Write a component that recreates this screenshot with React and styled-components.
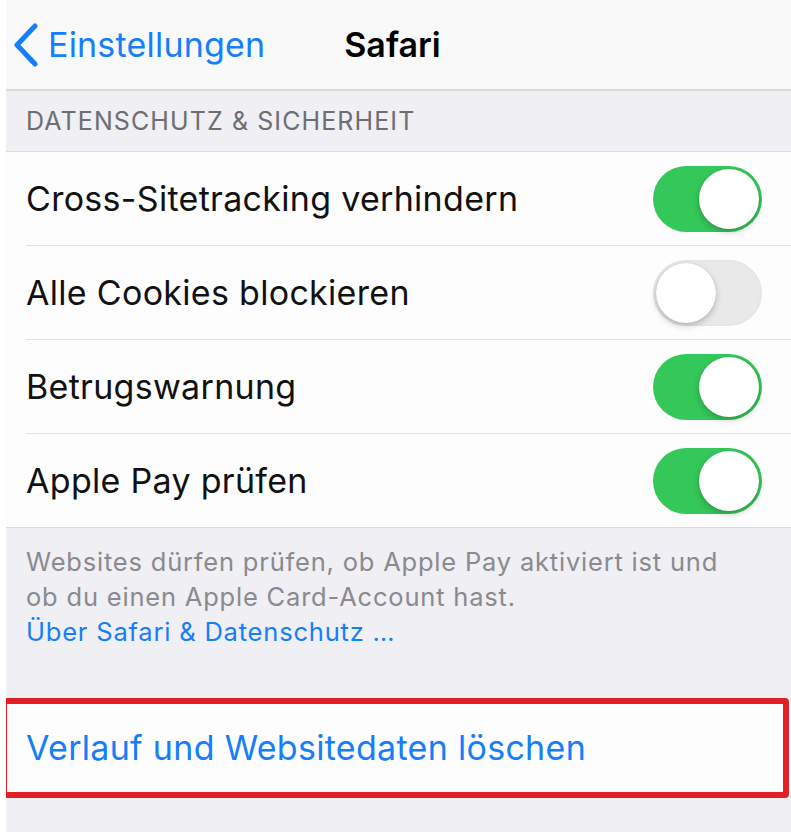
import React from "react";
import styled, { createGlobalStyle } from "styled-components";

const GlobalStyle = createGlobalStyle`
  body {
    margin: 0;
    background: #ffffff;
    font-family: Inter, "Noto Sans", sans-serif;
  }
`;

const Screen = styled.div`
  margin-left: 6px;
  width: 785px;
  height: 832px;
  background: #efeff4;
  overflow: hidden;
`;

const NavBar = styled.div`
  position: relative;
  height: 89px;
  background: #f9f9f9;
  border-bottom: 2px solid #d9d9dc;
  display: flex;
  align-items: center;
`;

const BackButton = styled.div`
  display: flex;
  align-items: center;
  gap: 8px;
  padding-left: 6px;
  color: #157efb;
  font-size: 34px;
  letter-spacing: 0.2px;
`;

const Title = styled.div`
  position: absolute;
  left: 0;
  right: 0;
  text-align: center;
  font-size: 34px;
  font-weight: 600;
  color: #000;
  pointer-events: none;
  padding-right: 12px;
`;

const SectionHeader = styled.div`
  height: 60px;
  padding-left: 20px;
  display: flex;
  align-items: center;
  color: #6d6d72;
  font-size: 25px;
  letter-spacing: 1.1px;
  border-bottom: 1px solid #dcdce0;
`;

const Group = styled.div`
  background: #fdfdfd;
  border-bottom: 1px solid #dcdce0;
`;

const Row = styled.div`
  height: 93px;
  margin-left: 20px;
  padding-right: 29px;
  display: flex;
  align-items: center;
  justify-content: space-between;
  border-bottom: ${(p) => (p.$last ? "none" : "1px solid #e2e2e5")};
`;

const Label = styled.span`
  font-size: 34px;
  color: #111;
  letter-spacing: 0.3px;
`;

const Track = styled.div`
  position: relative;
  width: 109px;
  height: 66px;
  border-radius: 33px;
  box-sizing: border-box;
  background: ${(p) => (p.$on ? "#34c759" : "#e9e9ea")};
  border: ${(p) => (p.$on ? "none" : "2px solid #e6e6e8")};
`;

const Knob = styled.div`
  position: absolute;
  top: ${(p) => (p.$on ? "3px" : "1px")};
  left: ${(p) => (p.$on ? "46px" : "1px")};
  width: 60px;
  height: 60px;
  border-radius: 50%;
  background: #fff;
  box-shadow: 0 3px 6px rgba(0, 0, 0, 0.22), 0 0 1px rgba(0, 0, 0, 0.2);
`;

const Footer = styled.div`
  padding: 16px 20px 0 20px;
  height: 155px;
  font-size: 25.5px;
  line-height: 35px;
  letter-spacing: 0.8px;
  color: #8a8a8e;
  white-space: nowrap;
`;

const FooterLink = styled.div`
  color: #157efb;
`;

const ActionRow = styled.div`
  position: relative;
  height: 97px;
  background: #fdfdfd;
  display: flex;
  align-items: center;
  padding-left: 20px;
  color: #157efb;
  font-size: 34px;
  letter-spacing: 0.3px;
`;

const Highlight = styled.div`
  position: absolute;
  left: -5px;
  right: 2px;
  top: -1px;
  bottom: -2px;
  border: 6px solid #e31e24;
  border-radius: 4px;
  pointer-events: none;
`;

function Toggle({ on }) {
  return (
    <Track $on={on}>
      <Knob $on={on} />
    </Track>
  );
}

const rows = [
  { label: "Cross-Sitetracking verhindern", on: true },
  { label: "Alle Cookies blockieren", on: false },
  { label: "Betrugswarnung", on: true },
  { label: "Apple Pay prüfen", on: true },
];

export default function App() {
  return (
    <>
      <GlobalStyle />
      <Screen>
        <NavBar>
          <BackButton>
            <svg width="28" height="44" viewBox="0 0 28 44">
              <path
                d="M23 3 L5 22 L23 41"
                fill="none"
                stroke="#157efb"
                strokeWidth="5"
                strokeLinecap="round"
                strokeLinejoin="round"
              />
            </svg>
            Einstellungen
          </BackButton>
          <Title>Safari</Title>
        </NavBar>
        <SectionHeader>DATENSCHUTZ &amp; SICHERHEIT</SectionHeader>
        <Group>
          {rows.map((r, i) => (
            <Row key={r.label} $last={i === rows.length - 1}>
              <Label>{r.label}</Label>
              <Toggle on={r.on} />
            </Row>
          ))}
        </Group>
        <Footer>
          Websites dürfen prüfen, ob Apple Pay aktiviert ist und
          <br />
          ob du einen Apple Card-Account hast.
          <FooterLink>Über Safari &amp; Datenschutz …</FooterLink>
        </Footer>
        <ActionRow>
          Verlauf und Websitedaten löschen
          <Highlight />
        </ActionRow>
      </Screen>
    </>
  );
}
